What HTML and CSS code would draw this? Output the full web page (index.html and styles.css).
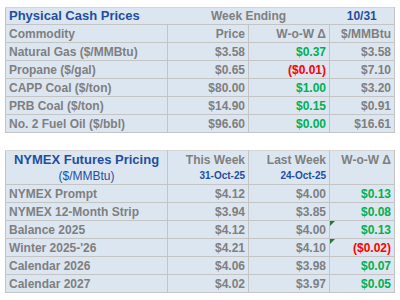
FILE: index.html
```html
<!DOCTYPE html>
<html>
<head>
<meta charset="utf-8">
<link rel="stylesheet" href="styles.css">
</head>
<body>
<div class="page">
<table class="grid cash">
  <colgroup><col class="c1"><col class="c2"><col class="c3"><col class="c4"></colgroup>
  <tr class="head">
    <td class="title">Physical Cash Prices</td>
    <td colspan="2" class="center">Week Ending</td>
    <td class="center blue">10/31</td>
  </tr>
  <tr><td>Commodity</td><td class="r">Price</td><td class="r">W-o-W Δ</td><td class="r">$/MMBtu</td></tr>
  <tr><td>Natural Gas ($/MMBtu)</td><td class="r">$3.58</td><td class="r green">$0.37</td><td class="r">$3.58</td></tr>
  <tr><td>Propane ($/gal)</td><td class="r">$0.65</td><td class="r red">($0.01)</td><td class="r">$7.10</td></tr>
  <tr><td>CAPP Coal ($/ton)</td><td class="r">$80.00</td><td class="r green">$1.00</td><td class="r">$3.20</td></tr>
  <tr><td>PRB Coal ($/ton)</td><td class="r">$14.90</td><td class="r green">$0.15</td><td class="r">$0.91</td></tr>
  <tr><td>No. 2 Fuel Oil ($/bbl)</td><td class="r">$96.60</td><td class="r green">$0.00</td><td class="r">$16.61</td></tr>
</table>

<table class="grid nymex">
  <colgroup><col class="c1"><col class="c2"><col class="c3"><col class="c4"></colgroup>
  <tr class="head2">
    <td class="center"><div class="title">NYMEX Futures Pricing</div><div class="blue-n">($/MMBtu)</div></td>
    <td class="r top"><div>This Week</div><div class="date">31-Oct-25</div></td>
    <td class="r top"><div>Last Week</div><div class="date">24-Oct-25</div></td>
    <td class="r top"><div>W-o-W Δ</div></td>
  </tr>
  <tr><td>NYMEX Prompt</td><td class="r">$4.12</td><td class="r">$4.00</td><td class="r green">$0.13</td></tr>
  <tr><td>NYMEX 12-Month Strip</td><td class="r">$3.94</td><td class="r">$3.85</td><td class="r green">$0.08</td></tr>
  <tr><td>Balance 2025</td><td class="r">$4.12</td><td class="r">$4.00</td><td class="r green note">$0.13</td></tr>
  <tr><td>Winter 2025-'26</td><td class="r">$4.21</td><td class="r">$4.10</td><td class="r red note">($0.02)</td></tr>
  <tr><td>Calendar 2026</td><td class="r">$4.06</td><td class="r">$3.98</td><td class="r green">$0.07</td></tr>
  <tr><td>Calendar 2027</td><td class="r">$4.02</td><td class="r">$3.97</td><td class="r green">$0.05</td></tr>
</table>
</div>
</body>
</html>
```
FILE: styles.css
```css
html, body {
  margin: 0;
  padding: 0;
  background: #ffffff;
}
.page {
  padding: 7px 0 0 5px;
  display: flex;
  flex-direction: column;
  gap: 17px;
  font-family: "Liberation Sans", Arial, sans-serif;
  font-weight: bold;
  font-size: 12px;
  color: #7f7f7f;
}
.grid {
  border-collapse: collapse;
  background: #dce6f1;
  table-layout: fixed;
  width: 389px;
}
.c1 { width: 162px; }
.c2 { width: 81px; }
.c3 { width: 81px; }
.c4 { width: 65px; }
.grid td {
  border: 1px solid #c4c4c4;
  height: 18px;
  padding: 0 3px;
  line-height: 14px;
  white-space: nowrap;
  overflow: visible;
  box-sizing: border-box;
}
.grid tr:first-child td { border-top-color: #d4d4d4; }
.cash .head td {
  border-left: none;
  border-right: none;
  height: 17px;
}
.cash .head td:first-child { border-left: 1px solid #c4c4c4; }
.cash .head td:last-child { border-right: 1px solid #c4c4c4; }
.title {
  color: #1f4e9f;
  font-size: 13px;
}
.blue { color: #1f4e9f; }
.blue-n { color: #1f4e9f; font-weight: normal; font-size: 12px; }
.center { text-align: center; }
.r { text-align: right; }
.green { color: #00b050; }
.red { color: #ff0000; }
.head2 td {
  height: 34px;
  line-height: 16px;
}
.head2 td.top { vertical-align: top; padding-top: 1px; }
.date {
  color: #1f4e9f;
  font-size: 10px;
  line-height: 15px;
}
.note { position: relative; }
.note::before {
  content: "";
  position: absolute;
  left: 0;
  top: 0;
  border-top: 5px solid #1e7b34;
  border-right: 5px solid transparent;
}
```
